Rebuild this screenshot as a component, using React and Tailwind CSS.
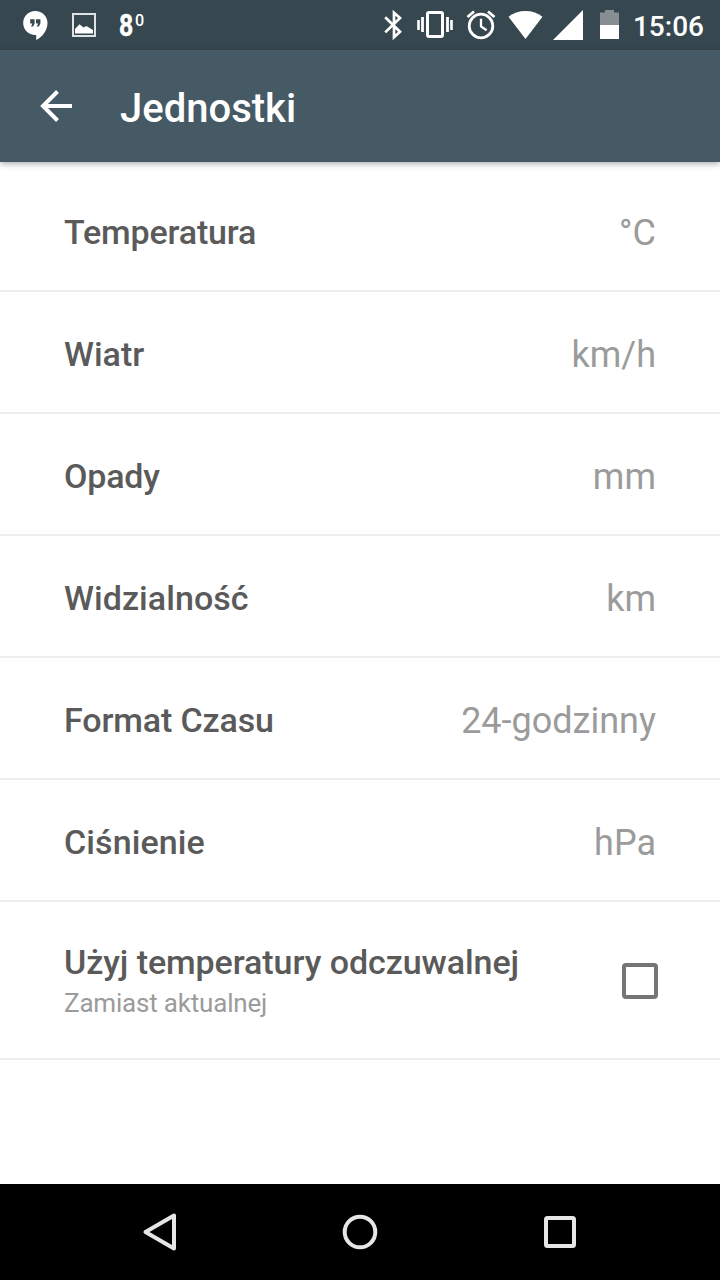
import clsx from 'clsx';

const UNITS = [
  { label: 'Temperatura', value: '°C', tracking: 'tracking-[-0.16px]' },
  { label: 'Wiatr', value: 'km/h' },
  { label: 'Opady', value: 'mm', tracking: 'tracking-[-0.2px]' },
  { label: 'Widzialność', value: 'km', tracking: 'tracking-[0.06px]' },
  { label: 'Format Czasu', value: '24-godzinny', tracking: 'tracking-[-0.14px]' },
  { label: 'Ciśnienie', value: 'hPa', tracking: 'tracking-[0.1px]' },
];

// every status icon is as tall as the bar, so only its width and margin vary
const StatusIcon = ({ width, className, children }) => (
  <svg width={width} height="50" viewBox={`0 0 ${width} 50`} fill="none" className={clsx('shrink-0', className)}>{children}</svg>
);

const StatusBar = () => (
  <div className="flex h-[50px] items-center bg-[#37474f] pr-4 pl-[23px] text-white">
    <StatusIcon width={25}>
      <path d="M12.300 11C5.500 11 .2 16.400 .2 23s5.300 12 12.100 12h.9v5c6.400-3.200 11.300-9.500 11.300-17C24.500 16.400 19.100 11 12.300 11z" fill="#fff" />
      <path d="M7.200 19.200h4.400v4.400l-1.500 3H8l1.400-3H7.200zM13 19.200h4.400v4.400l-1.500 3h-2.100l1.400-3H13z" fill="#37474f" />
    </StatusIcon>
    <StatusIcon width={24} className="ml-6">
      <rect x="1" y="14" width="22" height="22" stroke="#dfe3e4" strokeWidth="2" />
      <path d="M3 33.500v-4.500l4.500-4.700 4 3.200 2.800-1.500 6.700 4v3.500z" fill="#fff" />
    </StatusIcon>
    <div className="ml-[23px] flex h-[50px] w-7 items-start font-bold">
      <span className="mt-[10px] w-[14px] origin-left scale-x-[0.8] text-[31px] leading-8 [-webkit-text-stroke:0.5px_#fff]">8</span>
      <span className="mt-[10px] ml-[2px] origin-left scale-x-[0.95] text-[17px] leading-5 font-medium">0</span>
    </div>
    <div className="ml-auto flex items-center">
      <StatusIcon width={19}>
        <path d="M1.200 17.200L16 31.800 10 37.200V12.800l6 5.200L1.200 32.400" stroke="#fff" strokeWidth="2.700" />
      </StatusIcon>
      <StatusIcon width={36} className="ml-[14px]">
        <rect x="10.500" y="12.500" width="15" height="24" rx="1.500" stroke="#fff" strokeWidth="3" />
        <path d="M1.500 20v10M34.500 20v10" stroke="#fff" strokeWidth="2.600" />
        <path d="M5.500 17v15M30.500 17v15" stroke="#fff" strokeWidth="2.800" />
      </StatusIcon>
      <StatusIcon width={30} className="ml-[13px]">
        <circle cx="15" cy="26" r="11.800" stroke="#fff" strokeWidth="2.800" />
        <path d="M15 18.800V26.500l5.600 3.800" stroke="#fff" strokeWidth="2.300" />
        <path d="M1.500 17L8 11.500M28.500 17L22 11.500" stroke="#fff" strokeWidth="2.800" />
      </StatusIcon>
      <StatusIcon width={35} className="ml-3">
        <path d="M17.500 39L.5 16.700C5.300 13 11.200 11 17.500 11s12.200 2 17 5.700z" fill="#fff" />
      </StatusIcon>
      <StatusIcon width={30} className="ml-[10px]">
        <path d="M0 40L30 10v30z" fill="#fff" />
      </StatusIcon>
      <StatusIcon width={19} className="ml-[17px]">
        <path d="M0 25V12.500h5V10h9v2.500h5V25z" fill="#878f94" />
        <path d="M0 25h19v14H0z" fill="#fff" />
      </StatusIcon>
      <span className="mt-1 ml-[14px] text-[28px] leading-8 font-medium">15:06</span>
    </div>
  </div>
);

const AppBar = () => (
  <header className="relative flex h-28 items-center bg-[#455a64] pl-10 text-white shadow-[0_2px_6px_rgba(0,0,0,0.32)]">
    <svg width="32" height="32" viewBox="0 0 32 32" fill="none" stroke="#fff" strokeWidth="4">
      <path d="M17.500 1.500L3 16l14.500 14.500M2.500 16H32" />
    </svg>
    <h1 className="mt-[6px] ml-12 text-[40px] leading-[48px] font-medium">Jednostki</h1>
  </header>
);

const UnitRow = ({ label, value, tracking }) => (
  <li className="flex h-[122px] items-center justify-between border-b-2 border-[#eeeeee] px-16">
    <span className={clsx('mt-1 text-[34px] leading-10 font-medium text-[#5a5a5a]', tracking)}>{label}</span>
    <span className="mt-[6px] text-[36px] leading-[42px] text-[#9b9b9b]">{value}</span>
  </li>
);

const NavBar = () => (
  <nav className="flex h-24 items-center justify-center gap-40 bg-black">
    <svg width="40" height="40" viewBox="0 0 40 40" fill="none" stroke="#e6e6e6" strokeWidth="4" strokeLinejoin="round">
      <path d="M5.500 20L34 3.500v33z" />
    </svg>
    <svg width="40" height="40" viewBox="0 0 40 40" fill="none" stroke="#e6e6e6" strokeWidth="4">
      <circle cx="20" cy="20" r="15.300" />
    </svg>
    <svg width="40" height="40" viewBox="0 0 40 40" fill="none" stroke="#e6e6e6" strokeWidth="4">
      <rect x="6" y="6" width="28" height="28" rx="1.500" />
    </svg>
  </nav>
);

export default function App() {
  return (
    <div className="flex h-[1280px] w-[720px] flex-col overflow-hidden bg-white font-[Roboto,sans-serif]">
      <StatusBar />
      <AppBar />
      <ul className="flex-1 pt-2">
        {UNITS.map((unit) => <UnitRow key={unit.label} {...unit} />)}
        <li className="flex h-[158px] items-center justify-between border-b-2 border-[#eeeeee] pr-[62px] pl-16">
          <div className="-mt-px">
            <p className="text-[34px] leading-10 font-medium tracking-[-0.07px] text-[#5a5a5a]">Użyj temperatury odczuwalnej</p>
            <p className="mt-[6px] text-[26px] leading-[30px] tracking-[-0.19px] text-[#9b9b9b]">Zamiast aktualnej</p>
          </div>
          <div role="checkbox" aria-checked="false" className="mt-[2px] size-9 rounded-[4px] border-4 border-[#757575]" />
        </li>
      </ul>
      <NavBar />
    </div>
  );
}
